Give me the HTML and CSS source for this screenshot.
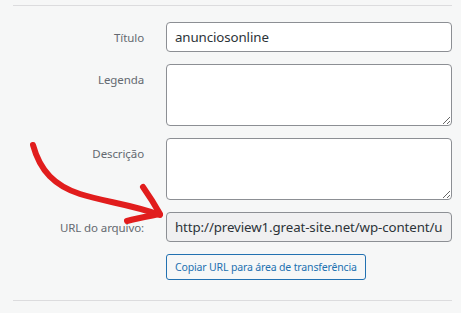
FILE: index.html
```html
<!DOCTYPE html>
<html lang="pt-BR">
<head>
    <meta charset="UTF-8">
    <title>Detalhes do anexo</title>
    <link rel="stylesheet" href="styles.css">
</head>
<body>

<div class="attachment-info">
    <div class="settings">
        <label class="setting">
            <span class="name">Título</span>
            <input type="text" value="anunciosonline">
        </label>
        <label class="setting">
            <span class="name">Legenda</span>
            <textarea></textarea>
        </label>
        <label class="setting">
            <span class="name">Descrição</span>
            <textarea></textarea>
        </label>
        <div class="setting">
            <span class="name">URL do arquivo:</span>
            <input type="text" class="readonly" value="http://preview1.great-site.net/wp-content/uploads/2023/anunciosonline.png" readonly>
        </div>
        <div class="setting">
            <span></span>
            <div><button class="copy-btn">Copiar URL para área de transferência</button></div>
        </div>
    </div>

    <!-- seta desenhada por cima -->
    <svg class="arrow" width="180" height="240" viewBox="0 0 180 240">
        <path d="M33 144 C40 170 55 185 80 193 C105 201 130 203 160 214" />
        <path d="M143 186 C150 196 155 204 160 213 C150 215 138 217 127 220" />
    </svg>
</div>

</body>
</html>
```

FILE: styles.css
```css
body {
    margin: 0;
    background: #f6f7f7;
    font-family: "Noto Sans", "Open Sans", sans-serif;
    color: #1d2327;
}
.attachment-info {
    position: relative;
    margin: 5px 9px 0 13px;
    border-top: 1px solid #dcdcde;
    border-bottom: 1px solid #dcdcde;
    height: 296px;
    box-sizing: border-box;
}
.settings {
    padding-top: 16px;
    display: flex;
    flex-direction: column;
    gap: 12px;
}
.setting {
    display: grid;
    grid-template-columns: 131px 286px;
    column-gap: 22px;
}
.setting .name {
    text-align: right;
    font-size: 11.5px;
    letter-spacing: -0.1px;
    color: #646970;
    padding-top: 8px;
    line-height: 16px;
}
.setting input,
.setting textarea {
    box-sizing: border-box;
    width: 286px;
    border: 1px solid #8c8f94;
    border-radius: 4px;
    background: #fff;
    font-family: inherit;
    color: #2c3338;
    margin: 0;
}
.setting input {
    height: 30px;
    padding: 0 8px;
    font-size: 13.3px;
    letter-spacing: -0.1px;
}
.setting textarea {
    height: 62px;
    padding: 4px 8px;
}
.setting input.readonly {
    background: #f0f0f1;
}
.copy-btn {
    margin-top: -3px;
    height: 26px;
    padding: 0 8px;
    border: 1px solid #2271b1;
    border-radius: 3px;
    background: #f6f7f7;
    color: #2271b1;
    font-family: inherit;
    font-size: 10.5px;
    letter-spacing: -0.15px;
    cursor: pointer;
}
.arrow {
    position: absolute;
    left: -13px;
    top: -5px;
    fill: none;
    stroke: #e11d1d;
    stroke-width: 6;
    stroke-linecap: round;
    stroke-linejoin: round;
    pointer-events: none;
}
```
